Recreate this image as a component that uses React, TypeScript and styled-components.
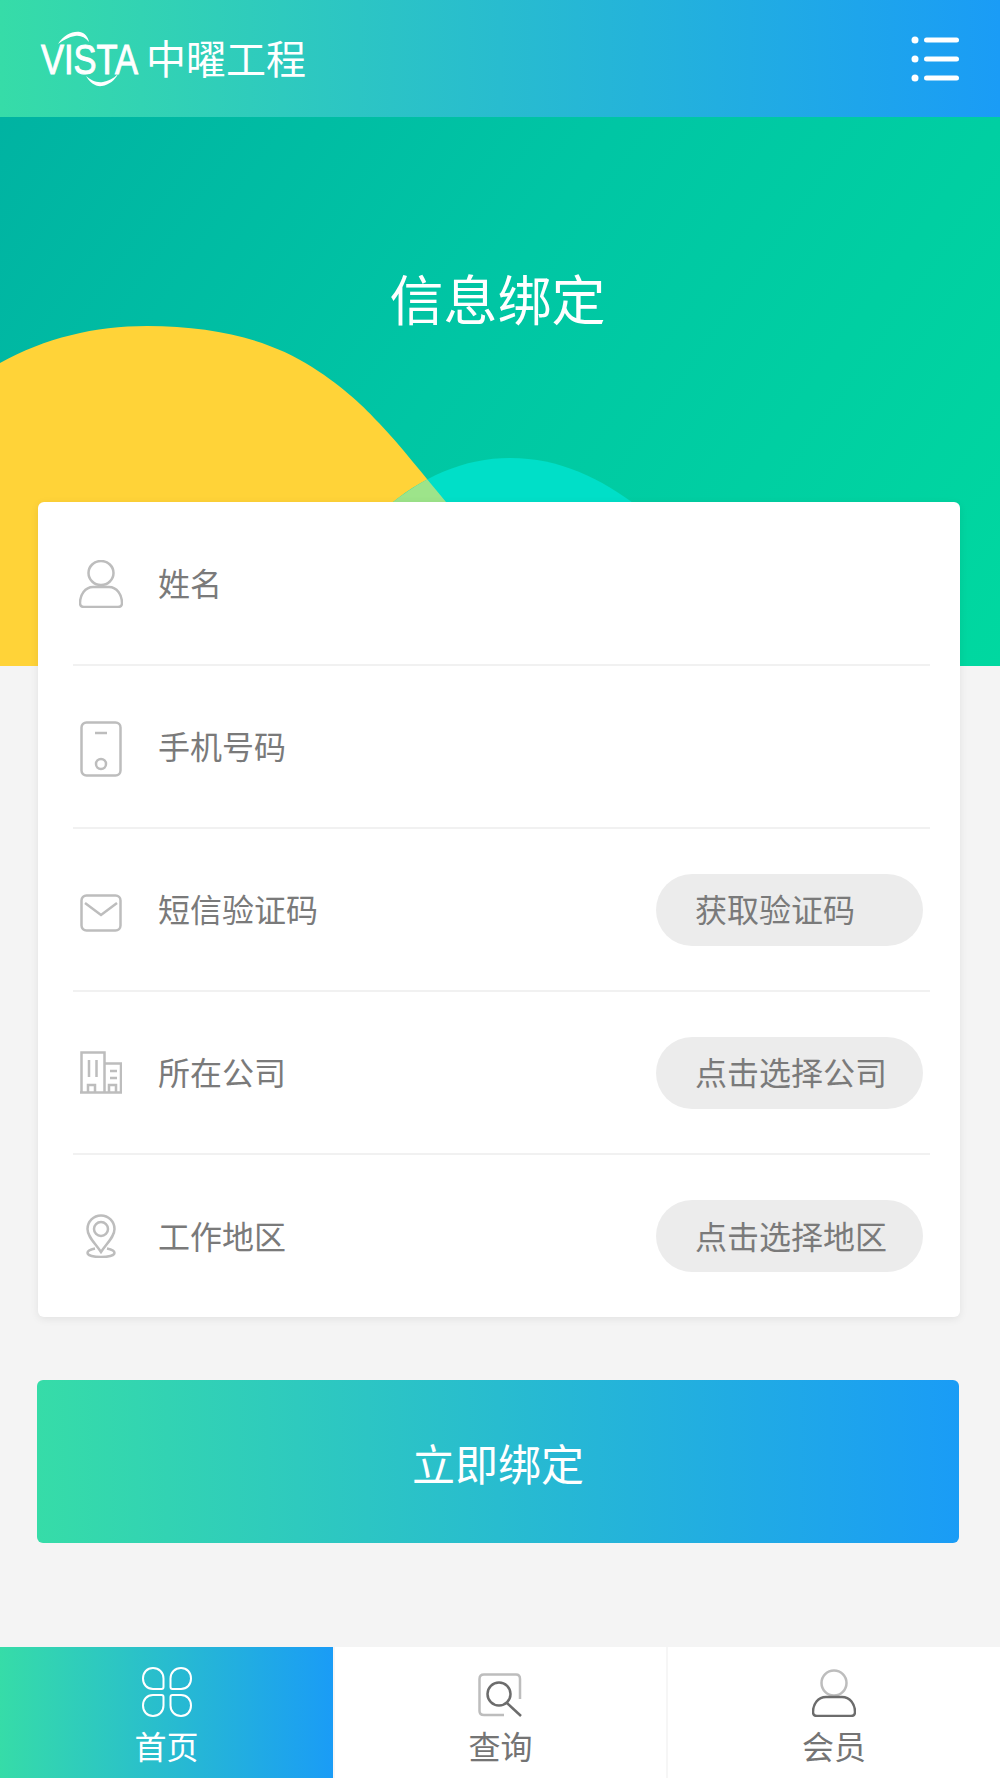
import React from 'react';
import styled, { createGlobalStyle } from 'styled-components';

const GlobalStyle = createGlobalStyle`
  html, body {
    margin: 0;
    padding: 0;
    background: #f4f4f4;
  }
  * {
    box-sizing: border-box;
  }
`;

const brandGradient = 'linear-gradient(90deg, #36dca8 0%, #1a9cf6 100%)';

const Page = styled.div`
  width: 1000px;
  min-height: 1778px;
  display: flex;
  flex-direction: column;
  background: #f4f4f4;
  font-family: 'Noto Sans CJK SC', 'Noto Sans', sans-serif;
  font-weight: 400;
`;

const Header = styled.header`
  height: 117px;
  display: flex;
  align-items: center;
  justify-content: space-between;
  padding: 0 41px 0 40px;
  background: ${brandGradient};
`;

const Brand = styled.div`
  display: flex;
  align-items: center;
  gap: 4px;
`;

const BrandName = styled.span`
  padding-bottom: 3px;
  color: #fff;
  font-size: 40px;
  line-height: 56px;
  white-space: nowrap;
`;

const Hero = styled.section`
  position: relative;
  height: 549px;
  padding-top: 149px;
  overflow: hidden;
  background: linear-gradient(125deg, #00b3a2 0%, #00c6a4 45%, #00d8a0 100%);
`;

const HeroArt = styled.svg`
  position: absolute;
  left: 0;
  top: 0;
`;

const HeroTitle = styled.h1`
  position: relative;
  margin: 0;
  padding-right: 5px;
  text-align: center;
  color: #fff;
  font-size: 54px;
  line-height: 64px;
  font-weight: 400;
`;

const Card = styled.div`
  position: relative;
  margin: -164px 40px 0 38px;
  padding: 1px 30px 0 35px;
  background: #fff;
  border-radius: 6px;
  box-shadow: 0 2px 8px rgba(0, 0, 0, 0.08);
`;

const Row = styled.div<{ $last?: boolean }>`
  height: ${(p) => (p.$last ? '162px' : '163px')};
  display: flex;
  align-items: center;
  border-bottom: ${(p) => (p.$last ? 'none' : '2px solid #f1f1f1')};
`;

const IconSlot = styled.div<{ $drop?: number }>`
  width: 46px;
  margin: 0 34px 0 5px;
  padding-top: ${(p) => p.$drop ?? 0}px;
  flex: none;
  display: flex;
  align-items: center;
  justify-content: center;
`;

const RowLabel = styled.div`
  flex: 1;
  padding-bottom: 3px;
  font-size: 32px;
  line-height: 44px;
  color: #7a7a7a;
`;

const Pill = styled.div`
  width: 267px;
  height: 72px;
  margin-right: 7px;
  padding: 0 0 3px 39px;
  display: flex;
  align-items: center;
  border-radius: 36px;
  background: #ececec;
  color: #7a7a7a;
  font-size: 32px;
  white-space: nowrap;
`;

const BindButton = styled.div`
  height: 163px;
  margin: 63px 41px 0 37px;
  display: flex;
  align-items: center;
  justify-content: center;
  border-radius: 6px;
  background: ${brandGradient};
  color: #fff;
  font-size: 43px;
`;

const TabBar = styled.nav`
  margin-top: auto;
  height: 131px;
  display: grid;
  grid-template-columns: 333px 333px 334px;
  background: #fff;
`;

const Tab = styled.div<{ $active?: boolean }>`
  display: flex;
  flex-direction: column;
  align-items: center;
  padding-top: 20px;
  background: ${(p) => (p.$active ? brandGradient : '#fff')};
  border-left: ${(p) => (p.$active ? 'none' : '2px solid #f6f6f6')};
  color: ${(p) => (p.$active ? '#fff' : '#747474')};
`;

const TabIcon = styled.div`
  height: 50px;
  display: flex;
  align-items: flex-end;
`;

const TabLabel = styled.div`
  margin-top: 6px;
  font-size: 32px;
  line-height: 44px;
`;

const Logo = () => (
  <svg width="102" height="58" viewBox="0 0 102 58">
    <path d="M18 14C24 5 32 1 40 2C45 3 48 7 49 12C45 7 40 5 35 6C29 7 23 10 18 14Z" fill="#fff" />
    <path d="M46 46C50 53 56 57 62 56C69 55 75 50 78 44C73 49 68 51 63 52C56 53 51 50 46 46Z" fill="#fff" />
    <text
      x="1"
      y="36"
      transform="scale(1 1.23)"
      fontFamily="'Liberation Sans', sans-serif"
      fontSize="34.5"
      fill="#fff"
      stroke="#fff"
      strokeWidth="0.8"
    >
      VISTA
    </text>
  </svg>
);

const MenuIcon = () => (
  <svg width="48" height="48" viewBox="0 0 48 48" fill="#fff">
    <circle cx="4" cy="5" r="3.5" />
    <circle cx="4" cy="24" r="3.5" />
    <circle cx="4" cy="43" r="3.5" />
    <rect x="13" y="2.5" width="35" height="5" rx="2.5" />
    <rect x="13" y="21.5" width="35" height="5" rx="2.5" />
    <rect x="13" y="40.5" width="35" height="5" rx="2.5" />
  </svg>
);

const yellowShape =
  'M0 363C45 338 95 326 147 326C215 326 270 340 312 367C345 388 365 408 379 423C400 445 425 477 446 502C480 560 500 610 520 666H0Z';
const tealShape = 'M350 545C395 490 450 458 510 458C560 458 600 478 640 508L720 666H350Z';

const HeroShapes = () => (
  <HeroArt width="1000" height="549" viewBox="0 117 1000 549">
    <defs>
      <clipPath id="yellowClip">
        <path d={yellowShape} />
      </clipPath>
    </defs>
    <path d={yellowShape} fill="#ffd338" />
    <path d={tealShape} fill="#00dfc8" />
    <path clipPath="url(#yellowClip)" d={tealShape} fill="#9de48a" />
  </HeroArt>
);

const grayLine = { fill: 'none', stroke: '#bdbdbd', strokeWidth: 2.5 };

const PersonIcon = () => (
  <svg width="44" height="48" viewBox="0 0 44 48" {...grayLine}>
    <ellipse cx="22" cy="13" rx="12.5" ry="12" />
    <path d="M14 27H30C38 27 43 35 43 43C43 46 41 47 39 47H5C3 47 1 46 1 43C1 35 6 27 14 27Z" />
  </svg>
);

const PhoneIcon = () => (
  <svg width="42" height="56" viewBox="0 0 42 56" {...grayLine}>
    <rect x="1.5" y="1.5" width="39" height="53" rx="5" />
    <path d="M15 12H27" />
    <circle cx="21" cy="43" r="5" />
  </svg>
);

const MailIcon = () => (
  <svg width="42" height="38" viewBox="0 0 42 38" {...grayLine}>
    <rect x="1.5" y="1.5" width="39" height="35" rx="5" />
    <path d="M5 9L21 21L37 9" />
  </svg>
);

const BuildingIcon = () => (
  <svg width="42" height="43" viewBox="0 0 42 43" {...grayLine}>
    <path d="M1.5 41.5V1.5H24.5V41.5M24.5 12.5H41V41.5M0 41.5H42" />
    <path d="M9 9V26M16.5 9V26M30 20H37M30 27H37M8 41V34H15V41M29 41V34H36V41" />
  </svg>
);

const PinIcon = () => (
  <svg width="30" height="44" viewBox="0 0 30 44" {...grayLine}>
    <path d="M15 38C9 29 1.5 23 1.5 15A13.5 13.5 0 0 1 28.5 15C28.5 23 21 29 15 38Z" />
    <circle cx="15" cy="15" r="7" />
    <path d="M9 34.5C4 35.5 1.5 37 1.5 39C1.5 41.5 8 43 15 43C22 43 28.5 41.5 28.5 39C28.5 37 26 35.5 21 34.5" />
  </svg>
);

const petal = 'M19.5 22H11C5 22 1 17.5 1 11.5C1 5.5 5 1 11 1C17 1 21.5 5.5 21.5 11.5V20C21.5 21.5 21 22 19.5 22Z';

const CloverIcon = () => (
  <svg width="50" height="50" viewBox="0 0 50 50" fill="none" stroke="#fff" strokeWidth="2">
    <path d={petal} />
    <path d={petal} transform="matrix(-1 0 0 1 50 0)" />
    <path d={petal} transform="matrix(1 0 0 -1 0 50)" />
    <path d={petal} transform="matrix(-1 0 0 -1 50 50)" />
  </svg>
);

const SearchTabIcon = () => (
  <svg width="45" height="44" viewBox="0 0 45 44" fill="none" strokeWidth="2.5">
    <path d="M26 42H6C3 42 1.5 40.5 1.5 38V6C1.5 3 3 1.5 6 1.5H38C40.5 1.5 42 3 42 6V26" stroke="#bdbdbd" />
    <circle cx="21" cy="21" r="11.5" stroke="#6c6c6c" />
    <path d="M29 30L43 43" stroke="#6c6c6c" />
  </svg>
);

const MemberTabIcon = () => (
  <svg width="44" height="48" viewBox="0 0 44 48" fill="none" strokeWidth="2.5">
    <circle cx="22" cy="14" r="12.5" stroke="#bdbdbd" />
    <path d="M14 28H30C38 28 43 35 43 43C43 46 41 47 39 47H5C3 47 1 46 1 43C1 35 6 28 14 28Z" stroke="#6c6c6c" />
  </svg>
);

const rows = [
  { icon: <PersonIcon />, label: '姓名' },
  { icon: <PhoneIcon />, label: '手机号码', drop: 5 },
  { icon: <MailIcon />, label: '短信验证码', action: '获取验证码', drop: 7 },
  { icon: <BuildingIcon />, label: '所在公司', action: '点击选择公司' },
  { icon: <PinIcon />, label: '工作地区', action: '点击选择地区' },
];

const App = () => {
  return (
    <Page>
      <GlobalStyle />
      <Header>
        <Brand>
          <Logo />
          <BrandName>中曜工程</BrandName>
        </Brand>
        <MenuIcon />
      </Header>
      <Hero>
        <HeroShapes />
        <HeroTitle>信息绑定</HeroTitle>
      </Hero>
      <Card>
        {rows.map((row, index) => (
          <Row key={row.label} $last={index === rows.length - 1}>
            <IconSlot $drop={row.drop}>{row.icon}</IconSlot>
            <RowLabel>{row.label}</RowLabel>
            {row.action && <Pill>{row.action}</Pill>}
          </Row>
        ))}
      </Card>
      <BindButton>立即绑定</BindButton>
      <TabBar>
        <Tab $active>
          <TabIcon>
            <CloverIcon />
          </TabIcon>
          <TabLabel>首页</TabLabel>
        </Tab>
        <Tab>
          <TabIcon>
            <SearchTabIcon />
          </TabIcon>
          <TabLabel>查询</TabLabel>
        </Tab>
        <Tab>
          <TabIcon>
            <MemberTabIcon />
          </TabIcon>
          <TabLabel>会员</TabLabel>
        </Tab>
      </TabBar>
    </Page>
  );
};

export default App;
